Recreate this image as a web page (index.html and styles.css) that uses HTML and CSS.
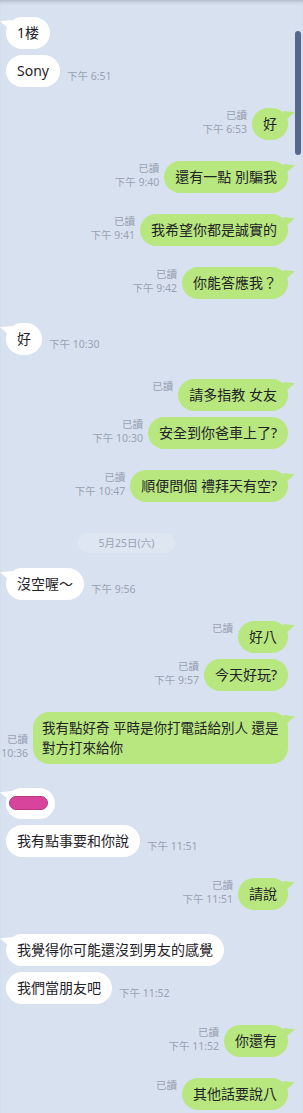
FILE: index.html
```html
<!DOCTYPE html>
<html lang="zh-Hant">

<head>
    <meta charset="UTF-8">
    <meta name="viewport" content="width=device-width, initial-scale=1.0">
    <title>Chat</title>
    <link rel="stylesheet" href="styles.css">
</head>

<body>
    <div class="chat">
        <div class="scroll-thumb"></div>

        <div class="messages">
            <!-- 5/24 -->
            <div class="row in first" style="margin-top: 17px">
                <div class="bubble tail">1楼</div>
            </div>
            <div class="row in cont">
                <div class="bubble">Sony</div>
                <div class="time">下午 6:51</div>
            </div>

            <div class="row out">
                <div class="meta"><span>已讀</span><span>下午 6:53</span></div>
                <div class="bubble tail">好</div>
            </div>
            <div class="row out">
                <div class="meta"><span>已讀</span><span>下午 9:40</span></div>
                <div class="bubble tail">還有一點 別騙我</div>
            </div>
            <div class="row out">
                <div class="meta"><span>已讀</span><span>下午 9:41</span></div>
                <div class="bubble tail">我希望你都是誠實的</div>
            </div>
            <div class="row out">
                <div class="meta"><span>已讀</span><span>下午 9:42</span></div>
                <div class="bubble tail">你能答應我？</div>
            </div>

            <div class="row in switch">
                <div class="bubble tail">好</div>
                <div class="time">下午 10:30</div>
            </div>

            <div class="row out switch">
                <div class="meta"><span>已讀</span><span></span></div>
                <div class="bubble tail">請多指教 女友</div>
            </div>
            <div class="row out cont">
                <div class="meta"><span>已讀</span><span>下午 10:30</span></div>
                <div class="bubble">安全到你爸車上了?</div>
            </div>
            <div class="row out">
                <div class="meta"><span>已讀</span><span>下午 10:47</span></div>
                <div class="bubble tail">順便問個 禮拜天有空?</div>
            </div>

            <!-- 5/25 -->
            <div class="date">5月25日(六)</div>

            <div class="row in" style="margin-top: 15px">
                <div class="bubble tail">沒空喔～</div>
                <div class="time">下午 9:56</div>
            </div>

            <div class="row out">
                <div class="meta"><span>已讀</span><span></span></div>
                <div class="bubble tail">好八</div>
            </div>
            <div class="row out cont">
                <div class="meta"><span>已讀</span><span>下午 9:57</span></div>
                <div class="bubble">今天好玩?</div>
            </div>
            <div class="row out">
                <div class="meta"><span>已讀</span><span>下午 10:36</span></div>
                <div class="bubble tail long">我有點好奇 平時是你打電話給別人 還是對方打來給你</div>
            </div>

            <div class="row in switch">
                <div class="bubble tail hidden-name"><span class="redact"></span></div>
            </div>
            <div class="row in cont">
                <div class="bubble">我有點事要和你說</div>
                <div class="time">下午 11:51</div>
            </div>

            <div class="row out">
                <div class="meta"><span>已讀</span><span>下午 11:51</span></div>
                <div class="bubble tail">請說</div>
            </div>

            <div class="row in switch">
                <div class="bubble tail">我覺得你可能還沒到男友的感覺</div>
            </div>
            <div class="row in cont">
                <div class="bubble">我們當朋友吧</div>
                <div class="time">下午 11:52</div>
            </div>

            <div class="row out">
                <div class="meta"><span>已讀</span><span>下午 11:52</span></div>
                <div class="bubble tail">你還有</div>
            </div>
            <div class="row out">
                <div class="meta"><span>已讀</span><span></span></div>
                <div class="bubble tail">其他話要說八</div>
            </div>
            <div class="row out cont">
                <div class="bubble partial">&nbsp;</div>
            </div>
        </div>
    </div>
</body>

</html>
```

FILE: styles.css
```css
body {
    margin: 0;
    padding: 0;
    background-color: #d8e1ef;
    font-family: "Noto Sans", "Noto Sans CJK TC", sans-serif;
    color: #1f2329;
}

.chat {
    position: relative;
    height: 1113px;
    overflow: hidden;
    box-shadow: inset 0 4px 4px -3px rgba(60, 70, 90, 0.35);
}

/* fake scrollbar, sits over the messages */
.scroll-thumb {
    position: absolute;
    top: 31px;
    right: 2px;
    width: 6px;
    height: 124px;
    border-radius: 3px;
    background-color: #57688d;
}

.messages {
    display: flex;
    flex-direction: column;
    padding: 0 15px 0 6px;
}

.row {
    display: flex;
    align-items: flex-end;
    margin-top: 21px;
}

.row.cont {
    margin-top: 6px;
}

.row.switch {
    margin-top: 24px;
}

.row.out {
    justify-content: flex-end;
}

.bubble {
    position: relative;
    flex-shrink: 0;
    max-width: 255px;
    box-sizing: border-box;
    padding: 6px 11px;
    border-radius: 16px;
    font-size: 14px;
    line-height: 20px;
    background-color: #fff;
    word-break: break-all;
}

.out .bubble {
    background-color: #b7e77e;
}

.bubble.long {
    padding: 6px 9px;
    font-size: 13.5px;
}

/* little tail on the first bubble of a group */
.bubble.tail::before {
    content: "";
    position: absolute;
    top: 3px;
    width: 12px;
    height: 9px;
    background-color: inherit;
}

.in .bubble.tail::before {
    left: -6px;
    clip-path: polygon(0 15%, 100% 0, 75% 100%);
}

.out .bubble.tail::before {
    right: -7px;
    clip-path: polygon(100% 15%, 0 0, 25% 100%);
}

.time,
.meta {
    font-size: 10.5px;
    line-height: 14px;
    color: #98a1b3;
    white-space: nowrap;
    margin-bottom: 4px;
}

.time {
    margin-left: 7px;
}

.meta {
    display: flex;
    flex-direction: column;
    align-items: flex-end;
    flex-shrink: 0;
    margin-right: 5px;
}

.meta span {
    height: 14px;
}

.date {
    align-self: flex-start;
    margin: 31px 0 0 72px;
    width: 97px;
    height: 20px;
    line-height: 20px;
    border-radius: 10px;
    text-align: center;
    font-size: 10.5px;
    color: #98a1b3;
    background-color: #dee6f2;
}

.hidden-name {
    padding: 8px 7px 9px 3px;
    line-height: 13px;
}

.redact {
    display: block;
    width: 37px;
    height: 12px;
    border: 1px solid #b8387f;
    border-radius: 7px;
    background-color: #d8449c;
}

.bubble.partial {
    width: 145px;
}
```
